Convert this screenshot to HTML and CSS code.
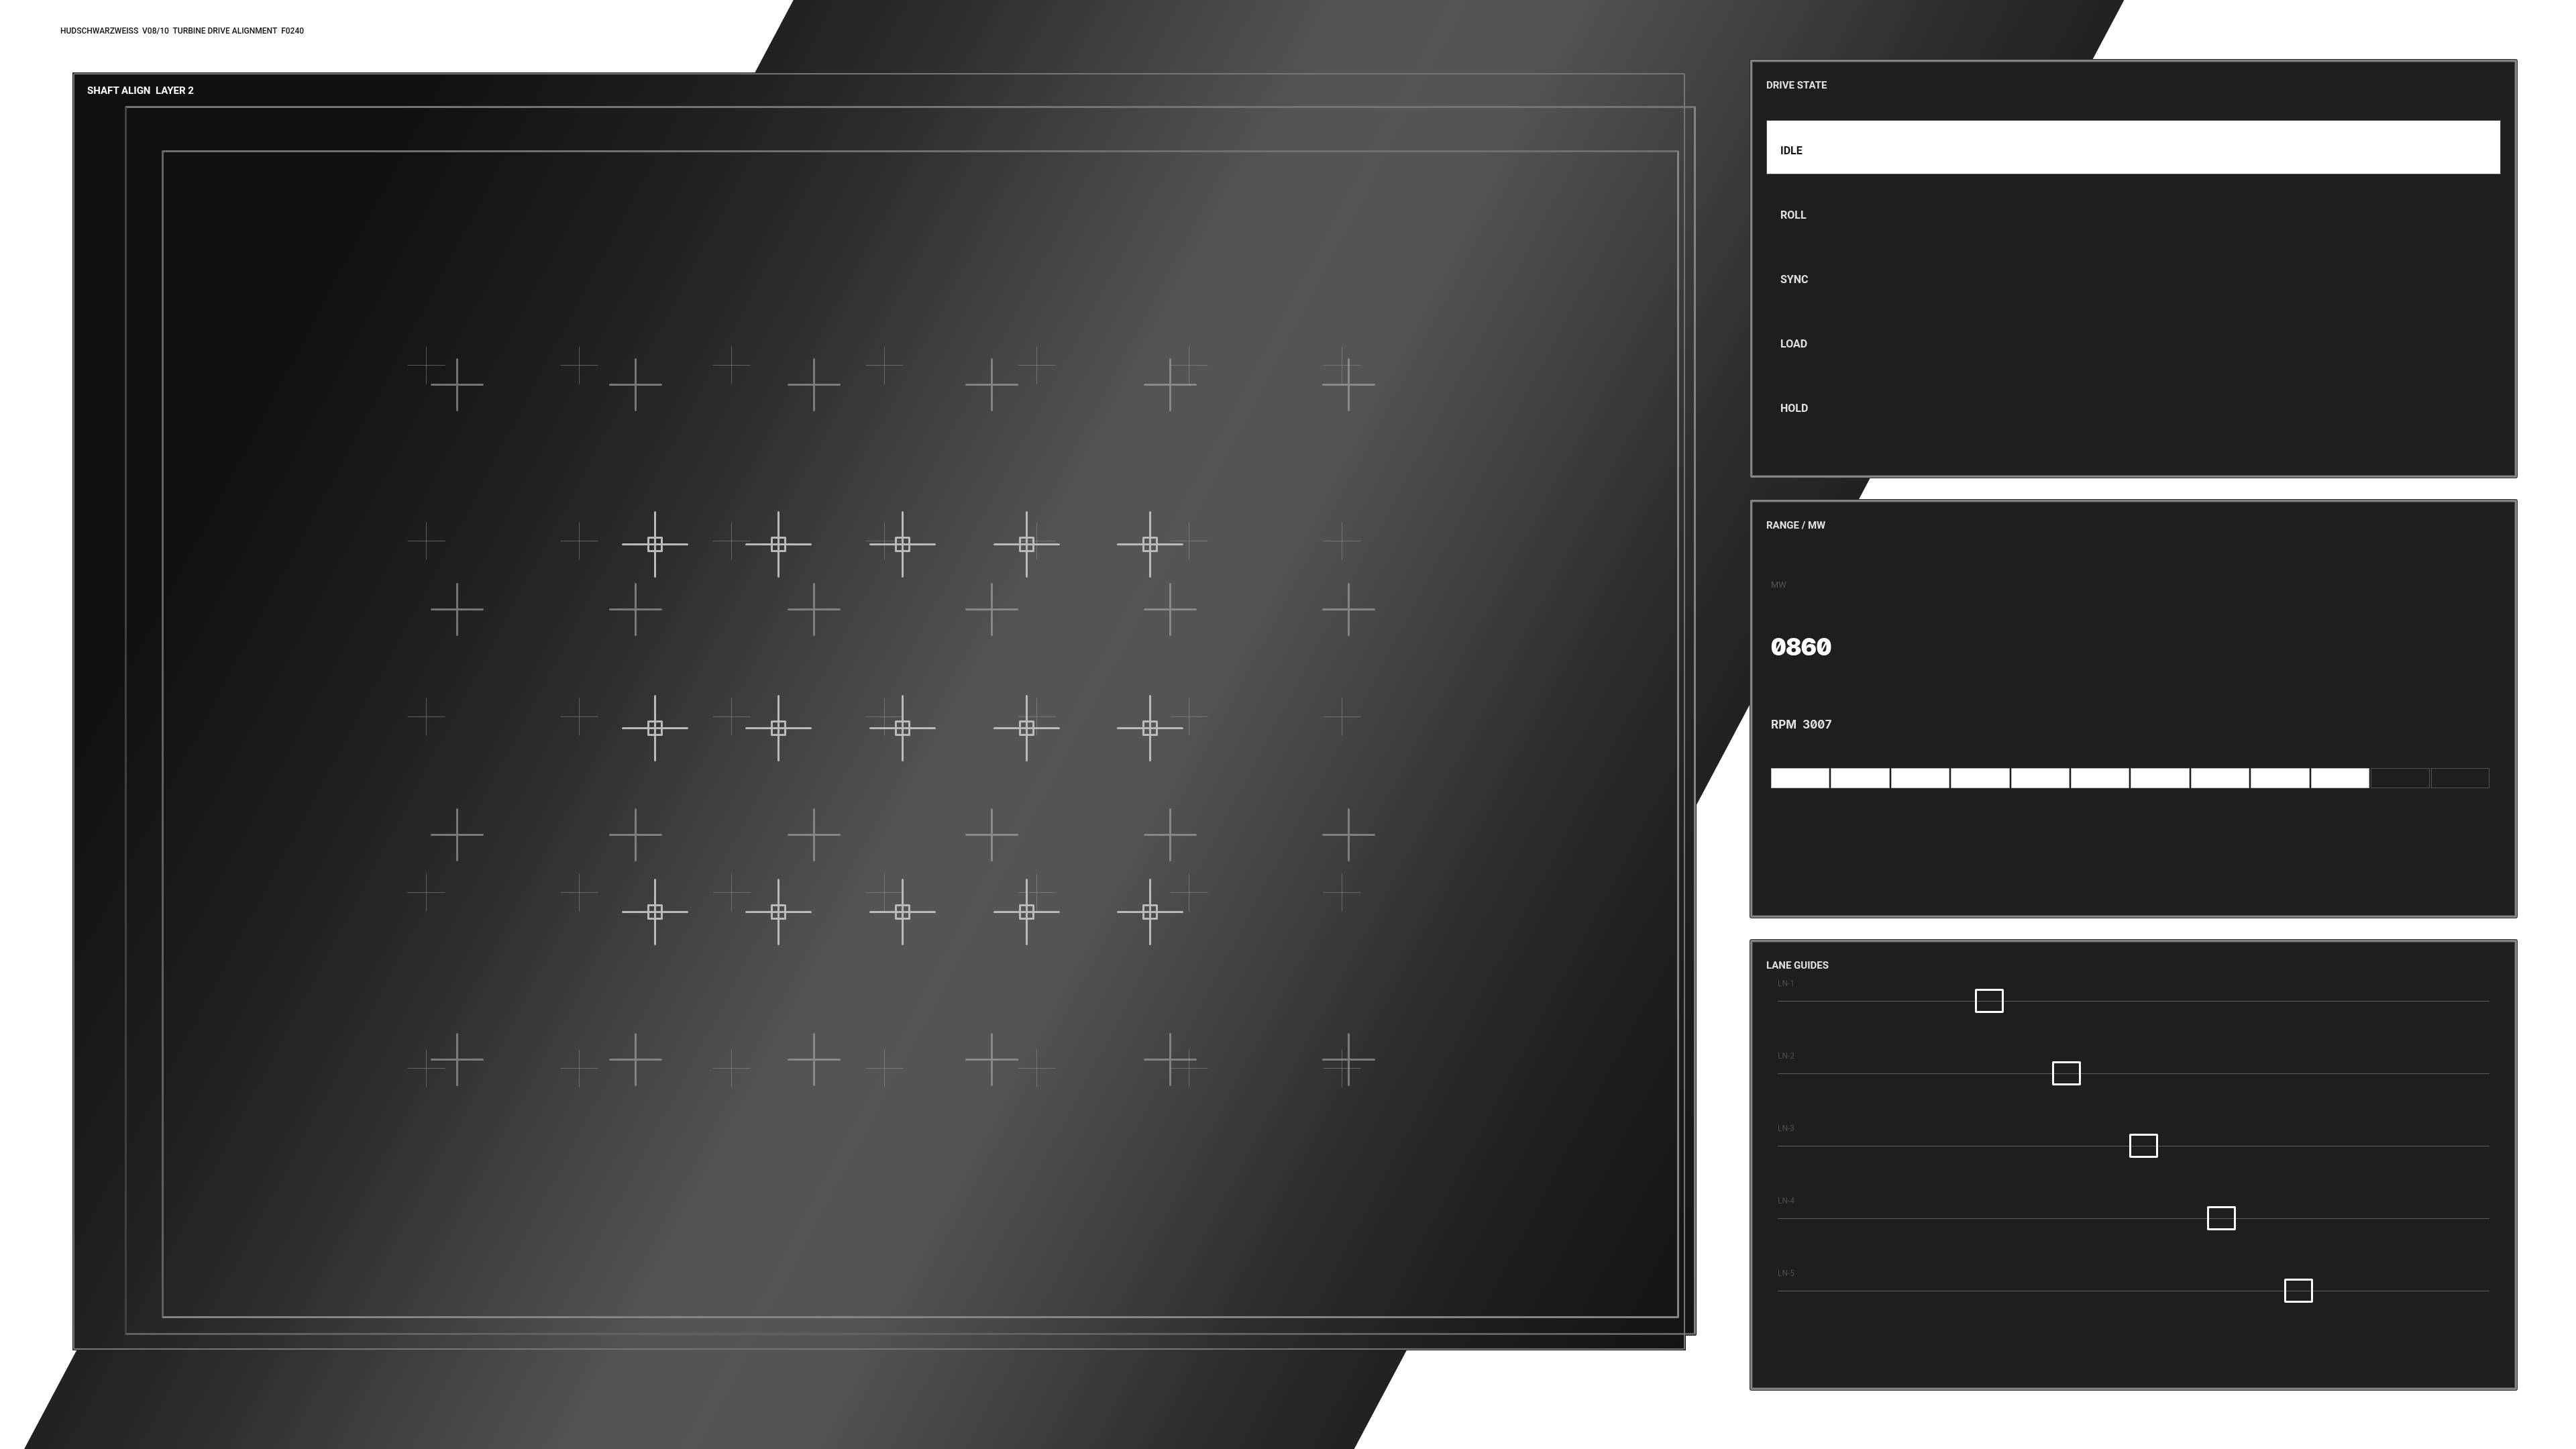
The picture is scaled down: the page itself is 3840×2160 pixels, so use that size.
FILE: index.html
```html
<!DOCTYPE html>
<html lang="en">
<head>
<meta charset="utf-8">
<title>Turbine Drive Alignment</title>
<link rel="stylesheet" href="styles.css">
</head>
<body>
<div class="band"></div>
<main class="hud">
  <section class="align">
    <h1 class="caption">HUDSCHWARZWEISS&nbsp; V08/10&nbsp; TURBINE DRIVE ALIGNMENT&nbsp; F0240</h1>
    <div class="stage">
      <div class="frame frame-mid"></div>
      <div class="frame frame-outer"></div>
      <div class="frame frame-inner"></div>
      <h2 class="title title-bright">SHAFT ALIGN&nbsp; LAYER 2</h2>
      <svg class="marks" viewBox="0 0 2405 1905" aria-hidden="true">
        <defs>
          <path id="far" d="M-28 0H28M0-28V28"/>
          <path id="near" d="M-38 0H38M0-38V38"/>
          <g id="node"><path d="M-48 0H48M0-48V48"/><rect x="-10" y="-10" width="20" height="20"/></g>
          <g id="far-row"><use href="#far"/><use href="#far" x="228"/><use href="#far" x="455"/><use href="#far" x="683"/><use href="#far" x="910"/><use href="#far" x="1137"/><use href="#far" x="1365"/></g>
          <g id="near-row"><use href="#near"/><use href="#near" x="266"/><use href="#near" x="532"/><use href="#near" x="797"/><use href="#near" x="1063"/><use href="#near" x="1329"/></g>
          <g id="node-row"><use href="#node"/><use href="#node" x="184"/><use href="#node" x="369"/><use href="#node" x="554"/><use href="#node" x="738"/></g>
        </defs>
        <g class="far"><use href="#far-row" x="527.5" y="436.5"/><use href="#far-row" x="527.5" y="698.5"/><use href="#far-row" x="527.5" y="960.5"/><use href="#far-row" x="527.5" y="1222.5"/><use href="#far-row" x="527.5" y="1484.5"/></g>
        <g class="near"><use href="#near-row" x="573.5" y="465.5"/><use href="#near-row" x="573.5" y="800.5"/><use href="#near-row" x="573.5" y="1136.5"/><use href="#near-row" x="573.5" y="1471.5"/></g>
        <g class="node"><use href="#node-row" x="868.5" y="703.5"/><use href="#node-row" x="868.5" y="977.5"/><use href="#node-row" x="868.5" y="1251.5"/></g>
      </svg>
    </div>
  </section>
  <aside class="side">
    <section class="panel">
      <h2 class="title">DRIVE STATE</h2>
      <div class="states">
        <button class="state is-on" type="button">IDLE</button>
        <button class="state" type="button">ROLL</button>
        <button class="state" type="button">SYNC</button>
        <button class="state" type="button">LOAD</button>
        <button class="state" type="button">HOLD</button>
      </div>
    </section>
    <section class="panel">
      <h2 class="title">RANGE / MW</h2>
      <div class="range">
        <p class="unit">MW</p>
        <p class="value">0860</p>
        <p class="rpm">RPM&nbsp; 3007</p>
        <div class="meter">
          <span class="cell is-full"></span><span class="cell is-full"></span><span class="cell is-full"></span><span class="cell is-full"></span><span class="cell is-full"></span><span class="cell is-full"></span><span class="cell is-full"></span><span class="cell is-full"></span><span class="cell is-full"></span><span class="cell is-full"></span><span class="cell"></span><span class="cell"></span>
        </div>
      </div>
    </section>
    <section class="panel">
      <h2 class="title">LANE GUIDES</h2>
      <div class="lanes">
        <div class="lane"><label for="ln1">LN-1</label><input id="ln1" type="range" max="1000" value="289"></div>
        <div class="lane"><label for="ln2">LN-2</label><input id="ln2" type="range" max="1000" value="402"></div>
        <div class="lane"><label for="ln3">LN-3</label><input id="ln3" type="range" max="1000" value="515"></div>
        <div class="lane"><label for="ln4">LN-4</label><input id="ln4" type="range" max="1000" value="629"></div>
        <div class="lane"><label for="ln5">LN-5</label><input id="ln5" type="range" max="1000" value="742"></div>
      </div>
    </section>
  </aside>
</main>
</body>
</html>
```
FILE: styles.css
```css
:root {
  --sheen: linear-gradient(118deg, #101010 13.6%, #161616 17.3%, #1f1f1f 22.7%, #2d2d2d 28.8%, #373737 31.6%, #4b4b4b 37.6%, #545454 40.6%, #555 43.6%, #545454 46.6%, #4b4b4b 49.6%, #373737 55.6%, #2d2d2d 58.4%, #1f1f1f 64.5%, #161616 69.9%, #111 73.6%);
  --panel: #1e1e1e;
  --line: #848484;
  --dim: #505050;
}

*, *::before { box-sizing: border-box; margin: 0; }

body {
  background: #fff;
  color: #e2e2e2;
  font-family: Roboto, "Liberation Sans", sans-serif;
}

/* diagonal sheen behind everything */
.band {
  position: fixed;
  inset: 0;
  background: var(--sheen);
  clip-path: polygon(30.8% 0, 82.46% 0, 52.57% 100%, 0.94% 100%);
}

.hud {
  position: relative;
  display: grid;
  grid-template-columns: 2423fr 1143fr;
  gap: 96px;
  min-height: 100vh;
  padding: 0 88px 0 90px;
}

.align {
  display: flex;
  flex-direction: column;
  padding-bottom: 147px;
}

.caption {
  height: 108px;
  padding-top: 38px;
  color: #111;
  font-size: 12px;
  font-weight: 500;
  line-height: 16px;
}

.stage {
  position: relative;
  flex: 1;
  margin-left: 18px;
  padding: 18px 22px;
  background: var(--sheen) fixed;
}

.frame {
  position: absolute;
  border: 2px solid #757575;
  border-radius: 2px;
}

.frame-outer { inset: 1px; }

.frame-mid {
  inset: 49px -16px 22px 77px;
  padding: 1px;
  border: 0;
  background: var(--sheen) fixed;
}

.frame-mid::before {
  content: "";
  display: block;
  height: 100%;
  border-style: solid;
  border-width: 3px;
  border-color: #747474 var(--line) #626262 #414141;
  border-radius: 2px;
}

.frame-inner {
  inset: 116px 10px 48px 133px;
  border-width: 3px;
  border-color: #6f6f6f #858585 #858585 #626262;
}

.title {
  position: relative;
  font-size: 15px;
  font-weight: 700;
  line-height: 18px;
}

.title-bright { color: #fff; }

.marks {
  position: absolute;
  inset: 0;
  width: 100%;
  height: 100%;
  fill: none;
}

.far { stroke: #999; stroke-opacity: 0.5; stroke-width: 1; }
.near { stroke: #aaa; stroke-opacity: 0.62; stroke-width: 3; stroke-linecap: round; }
.node { stroke: #bababa; stroke-width: 3; stroke-linecap: round; stroke-linejoin: round; }

.side {
  display: grid;
  grid-template-rows: 623fr 623fr 671fr;
  gap: 33px;
  padding: 89px 0 88px;
}

.panel {
  padding: 26px 21px;
  background: var(--panel);
  border: 3px solid var(--line);
  border-radius: 2px;
  box-shadow: 0 0 0 1px #2a2a2a, inset 0 0 0 1px #444;
}

.states {
  display: flex;
  flex-direction: column;
  gap: 15px;
  margin-top: 43px;
}

.state {
  height: 81px;
  padding: 10px 20px 0;
  border: 1px solid transparent;
  background: none;
  color: #e2e2e2;
  font: 700 16px/20px Roboto, "Liberation Sans", sans-serif;
  text-align: left;
}

.state.is-on {
  border-color: var(--dim);
  background: #fff;
  color: #111;
}

.range {
  padding: 70px 17px 0 7px;
  font-family: Inter, Roboto, sans-serif;
  font-feature-settings: "zero", "tnum";
}

.unit {
  color: #555;
  font: 400 13px/20px Roboto, sans-serif;
}

.value {
  margin-top: 62px;
  color: #fff;
  font-size: 35px;
  font-weight: 900;
  line-height: 40px;
}

.rpm {
  margin-top: 86px;
  font-size: 17px;
  font-weight: 700;
  line-height: 20px;
}

.meter {
  display: grid;
  grid-template-columns: repeat(12, 1fr);
  gap: 2px;
  margin-top: 55px;
}

.cell {
  height: 30px;
  border: 1px solid #555;
}

.cell.is-full {
  border-color: #bbb;
  background: #fff;
}

.lanes {
  display: grid;
  gap: 56px;
  padding: 10px 17px 0;
}

.lane { display: grid; }

.lane label {
  height: 16px;
  color: #505050;
  font-size: 12px;
  line-height: 16px;
}

.lane input {
  width: 100%;
  height: 36px;
  margin: 0;
  appearance: none;
  background: linear-gradient(#5c5c5c, #5c5c5c) center / 100% 1px no-repeat;
}

.lane input::-webkit-slider-thumb {
  width: 43px;
  height: 36px;
  appearance: none;
  border: 3px solid #fff;
  border-radius: 2px;
  background: none;
}
```
